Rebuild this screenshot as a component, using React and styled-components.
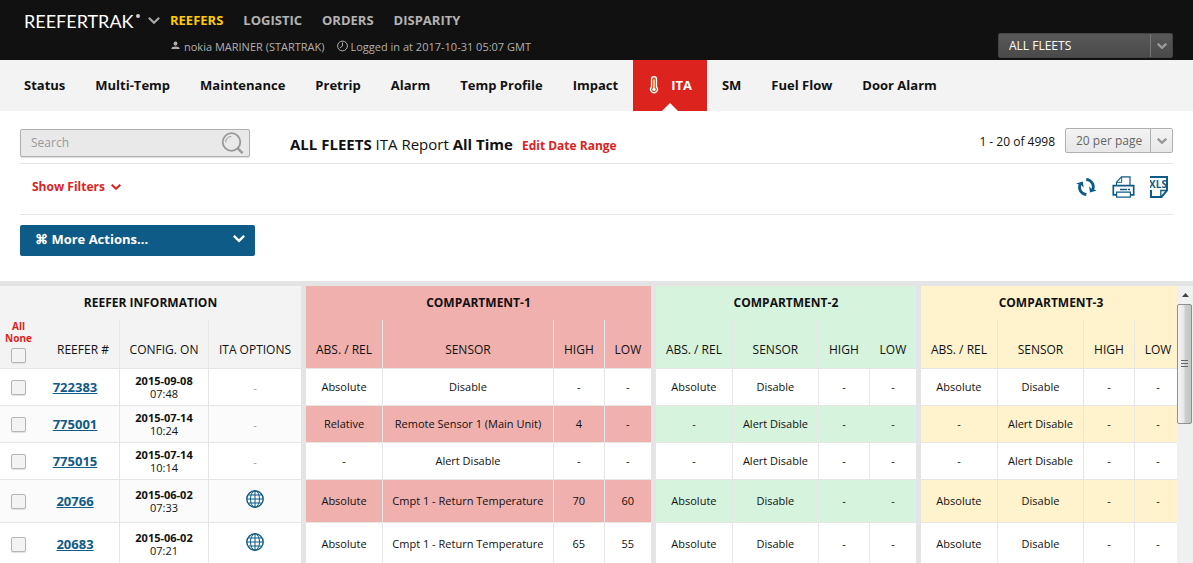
import React from "react";
import styled, { createGlobalStyle, css } from "styled-components";

const GlobalStyle = createGlobalStyle`
  *, *::before, *::after { box-sizing: border-box; }
  html, body { margin: 0; padding: 0; }
  body {
    font-family: "Open Sans", "Noto Sans", sans-serif;
    font-size: 12px;
    color: #111;
    background: #fff;
  }
  button, input, select { font-family: inherit; margin: 0; }
  a { color: inherit; text-decoration: none; }
`;

const Page = styled.div`
  height: 100vh;
  display: flex;
  flex-direction: column;
  overflow: hidden;
`;

/* ---------- top bar ---------- */

const TopBar = styled.header`
  flex: none;
  display: flex;
  align-items: flex-start;
  height: 60px;
  padding: 0 20px 0 24px;
  background: #111;
`;

const Brand = styled.button`
  flex: none;
  display: flex;
  align-items: center;
  width: 146px;
  height: 42px;
  padding: 0;
  border: 0;
  background: none;
  color: #fff;
  cursor: pointer;
`;

const Wordmark = styled.span`
  font-family: Lato, "Open Sans", sans-serif;
  font-size: 18px;
  line-height: 20px;
`;

const BrandDot = styled.span`
  width: 4px;
  height: 4px;
  margin: 0 8px 10px 2px;
  border-radius: 50%;
  background: #ccc;
`;

const TopMain = styled.div`
  flex: 1;
  min-width: 0;
  display: flex;
  flex-direction: column;
  gap: 8px;
  padding-top: 10px;
`;

const SectionNav = styled.nav`
  display: flex;
  gap: 20px;
`;

const SectionLink = styled.a`
  font-size: 13px;
  line-height: 20px;
  font-weight: 700;
  color: ${(p) => (p.$active ? "#fc0" : "#b3b3b3")};
`;

const SessionInfo = styled.div`
  display: flex;
  gap: 12px;
  color: #b0b0b0;
  font-size: 11px;
  line-height: 18px;
`;

const SessionItem = styled.span`
  display: flex;
  align-items: center;
  gap: 3px;
  white-space: nowrap;
`;

/* ---------- form controls ---------- */

const SelectBox = styled.div`
  flex: none;
  display: flex;
  position: relative;
  width: ${(p) => p.$width}px;
  height: 25px;
  margin-top: ${(p) => p.$top || 0}px;
  border: 1px solid ${(p) => (p.$dark ? "#444" : "#b0b0b0")};
  border-radius: 2px;
  background: ${(p) =>
    p.$dark
      ? "linear-gradient(#585858, #4a4a4a)"
      : "linear-gradient(#f3f3f3, #e8e8e8)"};
  color: ${(p) => (p.$dark ? "#fff" : "#666")};
`;

const SelectField = styled.select`
  appearance: none;
  width: 100%;
  padding: 0 24px 0 10px;
  border: 0;
  background: transparent;
  color: inherit;
  font-size: 12px;
  cursor: pointer;
`;

const SelectArrow = styled.span`
  position: absolute;
  top: 0;
  right: 0;
  bottom: 0;
  width: 22px;
  display: flex;
  align-items: center;
  justify-content: center;
  border-left: 1px solid ${(p) => (p.$dark ? "#777" : "#b0b0b0")};
  pointer-events: none;
`;

const Checkbox = styled.input`
  appearance: none;
  display: block;
  width: 15px;
  height: 15px;
  margin: 0 auto;
  border: 1px solid #b5b5b5;
  border-radius: 2px;
  background: #f3f3f3;
  box-shadow: 0 1px 1px #e0e0e0;
`;

/* ---------- report tabs ---------- */

const Tabs = styled.nav`
  flex: none;
  display: flex;
  height: 51px;
  padding-left: 9px;
  background: #f3f3f3;
`;

const Tab = styled.a`
  position: relative;
  display: flex;
  align-items: center;
  gap: 11px;
  padding: 0 15px 2px;
  font-size: 13px;
  line-height: 20px;
  font-weight: 700;
  white-space: nowrap;
  ${(p) =>
    p.$active &&
    css`
      background: #dc231e;
      color: #fff;
      &::after {
        content: "";
        position: absolute;
        left: 50%;
        bottom: 0;
        margin-left: -8px;
        border: 8px solid transparent;
        border-top: 0;
        border-bottom-color: #fff;
      }
    `}
`;

/* ---------- toolbar ---------- */

const Toolbar = styled.section`
  flex: none;
  padding: 0 20px;
`;

const TitleRow = styled.div`
  display: flex;
  align-items: flex-start;
  height: 53px;
  padding-top: 17px;
  border-bottom: 1px solid #e6e6e6;
`;

const SearchBox = styled.div`
  display: flex;
  align-items: center;
  width: 230px;
  height: 28px;
  margin-top: 1px;
  padding-right: 5px;
  border: 1px solid #b0b0b0;
  border-radius: 2px;
  background: #e9e9e9;
  box-shadow: 0 1px 1px #ddd;
`;

const SearchInput = styled.input`
  flex: 1;
  min-width: 0;
  padding: 0 10px 1px;
  border: 0;
  outline: 0;
  background: none;
  font-size: 12px;
  &::placeholder { color: #999; opacity: 1; }
`;

const Title = styled.h1`
  flex: 1;
  display: flex;
  align-items: baseline;
  gap: 9px;
  margin: 0;
  padding: 6px 0 0 40px;
  font-size: 15px;
  line-height: 20px;
  font-weight: 400;
  white-space: nowrap;
`;

const RedLink = styled.a`
  font-size: 12px;
  font-weight: 700;
  color: #dc231e;
`;

const RangeText = styled.span`
  padding: 4px 10px 0 0;
  font-size: 12px;
  line-height: 20px;
`;

const FilterRow = styled.div`
  display: flex;
  align-items: center;
  justify-content: space-between;
  height: 51px;
  padding: 0 5px 5px 12px;
  border-bottom: 1px solid #e6e6e6;
`;

const FilterToggle = styled.button`
  display: flex;
  align-items: center;
  gap: 6px;
  padding: 0;
  border: 0;
  background: none;
  color: #dc231e;
  font-size: 12px;
  font-weight: 700;
  cursor: pointer;
`;

const IconGroup = styled.div`
  display: flex;
  align-items: center;
  gap: 15px;
`;

const IconButton = styled.button`
  display: flex;
  padding: 0;
  border: 0;
  background: none;
  color: #0f5b87;
  cursor: pointer;
`;

const ActionsButton = styled.button`
  display: flex;
  align-items: center;
  justify-content: space-between;
  width: 235px;
  height: 31px;
  margin: 10px 0 25px;
  padding: 0 10px 3px 15px;
  border: 0;
  border-radius: 2px;
  background: #0f5b87;
  color: #fff;
  font-size: 13px;
  font-weight: 700;
  cursor: pointer;
`;

/* ---------- grid ---------- */

const GridArea = styled.section`
  flex: 1;
  min-height: 0;
  display: flex;
  border-top: 5px solid #e4e4e4;
`;

const GridViewport = styled.div`
  flex: 1;
  min-width: 0;
  overflow: hidden;
`;

const Table = styled.table`
  table-layout: fixed;
  width: 100%;
  min-width: 1186px;
  border-collapse: separate;
  border-spacing: 0;
  text-align: center;
`;

const tints = { plain: "#f3f3f3", red: "#f0b0ae", green: "#d6f3dd", yellow: "#fef3cc" };

const GroupHead = styled.th`
  height: 34px;
  padding: 0;
  border-right: 5px solid #e4e4e4;
  background: ${(p) => tints[p.$tint]};
  font-size: 12px;
  line-height: 16px;
  font-weight: 700;
`;

const ColumnHead = styled.th`
  height: 48px;
  padding: 0 0 10px;
  vertical-align: bottom;
  border-right: ${(p) => (p.$last ? "5px solid #e4e4e4" : p.$bare ? "0" : "1px solid #e6e6e6")};
  border-bottom: 1px solid #e6e6e6;
  background: ${(p) => tints[p.$tint]};
  font-size: 12px;
  line-height: 16px;
  font-weight: 400;
`;

const SelectHead = styled(ColumnHead)`
  padding-bottom: 5px;
`;

const ReeferHead = styled(ColumnHead)`
  padding-left: 10px;
`;

const PickLink = styled.a`
  display: block;
  font-size: 10px;
  line-height: 12px;
  font-weight: 700;
  color: #dc231e;
  &:last-of-type { margin-bottom: 4px; }
`;

const Cell = styled.td`
  height: ${(p) => (p.$tall ? 43 : 37)}px;
  padding: 0;
  border-right: ${(p) => (p.$last ? "5px solid #e4e4e4" : p.$bare ? "0" : "1px solid #e6e6e6")};
  border-bottom: 1px solid #e6e6e6;
  background: ${(p) => (!p.$striped ? "#fff" : p.$tint === "plain" ? "#fbfbfb" : tints[p.$tint])};
  font-size: 11px;
  line-height: 13px;
`;

const ReeferCell = styled(Cell)`
  padding-right: 6px;
`;

const ValueCell = styled(Cell)`
  padding-bottom: 2px;
`;

const ReeferLink = styled.a`
  font-size: 13px;
  line-height: 18px;
  font-weight: 700;
  color: #0f5b87;
  text-decoration: underline;
`;

const ConfigDate = styled.strong`
  display: block;
`;

const Muted = styled.span`
  color: #999;
`;

const ScrollTrack = styled.div`
  flex: none;
  width: 16px;
  display: flex;
  flex-direction: column;
  background: #f0f0f0;
`;

const ScrollArrow = styled.button`
  display: flex;
  align-items: center;
  justify-content: center;
  height: 18px;
  padding: 0;
  border: 0;
  background: none;
`;

const ScrollThumb = styled.div`
  display: flex;
  align-items: center;
  justify-content: center;
  width: 15px;
  height: 120px;
  border: 1px solid #8f8f8f;
  border-radius: 2px;
  background: linear-gradient(90deg, #f5f5f5, #e6e6e6 45%, #cfcfcf 55%, #c4c4c4);
`;

/* ---------- icons ---------- */

const Chevron = ({ color, size = 10, stroke = 2 }) => (
  <svg width={size} height={size * 0.6} viewBox="0 0 10 6" fill="none" stroke={color} strokeWidth={stroke} aria-hidden="true">
    <path d="M.7.7 5 4.8 9.3.7" />
  </svg>
);

const UserIcon = () => (
  <svg width="11" height="12" viewBox="0 0 11 12" fill="#b0b0b0" aria-hidden="true">
    <ellipse cx="5.5" cy="2.6" rx="1.9" ry="2.1" />
    <path d="M1.300 8c0-1.700 1.700-2.500 4.200-2.500S9.700 6.300 9.700 8z" />
  </svg>
);

const ClockIcon = () => (
  <svg width="11" height="14" viewBox="0 0 11 14" fill="none" stroke="#b0b0b0" aria-hidden="true">
    <circle cx="5.5" cy="6" r="4.9" />
    <path d="M5.5 2.5V6L3 8" />
  </svg>
);

const ThermometerIcon = () => (
  <svg width="12" height="18" viewBox="0 0 12 18" aria-hidden="true">
    <path d="M3.5 11V3.2a2.5 2.5 0 0 1 5 0V11a3.4 3.4 0 1 1-5 0z" fill="#c8531e" stroke="#fff" strokeWidth="1.3" />
    <path d="M6 3.5V13" stroke="#fbd9a0" strokeWidth="1.6" />
    <circle cx="6" cy="13.3" r="1.6" fill="#fff" />
  </svg>
);

const SearchIcon = () => (
  <svg width="23" height="23" viewBox="0 0 23 23" fill="none" stroke="#999" aria-hidden="true">
    <circle cx="10.5" cy="10" r="8.8" strokeWidth="1.8" />
    <path d="M4.6 10.2a6 6 0 0 1 5.6-5.8" strokeWidth="1" />
    <path d="m16.5 16.2 5 5" strokeWidth="2.4" />
  </svg>
);

const RefreshIcon = () => (
  <svg width="21" height="20" viewBox="0 0 21 20" fill="none" stroke="currentColor" strokeWidth="2.800" aria-hidden="true">
    <path d="M10.400 17.600C4.400 16.800 2 11.500 4.400 6.500" />
    <path d="M0 6.500 6.800 4.600l.9 6.200-2.200-2.600z" fill="currentColor" stroke="none" />
    <path d="M10.200 2.400C16.200 3.200 18.800 8.500 16.400 13.500" />
    <path d="m20.800 13.500-6.800 1.900-.9-6.200 2.200 2.600z" fill="currentColor" stroke="none" />
  </svg>
);

const PrintIcon = () => (
  <svg width="23" height="22" viewBox="0 0 23 22" fill="none" stroke="currentColor" aria-hidden="true">
    <path d="M4.500 9V6.200L9.500.8h8.500V9" strokeWidth="1.200" />
    <path d="M9.700 1v5.300H5" strokeWidth="1" />
    <path d="M4.500 18.800H1.300V9.700h20.400v9.100h-3.200" strokeWidth="1.700" />
    <path d="M4.600 16.200h13.800v5H4.600z" strokeWidth="1.200" />
    <path d="M8 13.500h7M16 13.500h2" strokeWidth="1.400" />
  </svg>
);

const XlsText = styled.text`
  font-family: "Liberation Sans Narrow", "Open Sans", sans-serif;
  font-size: 10px;
  font-weight: 700;
`;

const XlsIcon = () => (
  <svg width="18" height="22" viewBox="0 0 18 22" aria-hidden="true">
    <path d="M0 1h17v13.500L11.500 21H1v-7" fill="none" stroke="currentColor" strokeWidth="2" />
    <path d="M10.800 20.500v-6H17" fill="none" stroke="currentColor" strokeWidth="1.300" />
    <XlsText x="8" y="12" textAnchor="middle" fill="currentColor">XLS</XlsText>
  </svg>
);

const GlobeSvg = styled.svg`
  display: block;
  margin: 0 auto 4px;
`;

const GlobeIcon = () => (
  <GlobeSvg width="18" height="18" viewBox="0 0 18 18" fill="none" stroke="#0f5b87" role="img" aria-label="ITA options">
    <circle cx="9" cy="9" r="8.200" strokeWidth="1.400" />
    <ellipse cx="9" cy="9" rx="4.500" ry="8.200" />
    <path d="M9 1v16" />
    <path d="M1 9h16M2.500 5h13M2.500 13h13" />
  </GlobeSvg>
);

const ScrollUpIcon = () => (
  <svg width="7" height="4" viewBox="0 0 7 4" aria-hidden="true">
    <path d="M0 4 3.500 0 7 4z" fill="#444" />
  </svg>
);

const GripIcon = () => (
  <svg width="7" height="8" viewBox="0 0 7 8" stroke="#666" aria-hidden="true">
    <path d="M0 .5h7M0 3.500h7M0 6.500h7" />
  </svg>
);

/* ---------- data ---------- */

const sections = ["REEFERS", "LOGISTIC", "ORDERS", "DISPARITY"];
const tabs = [
  "Status", "Multi-Temp", "Maintenance", "Pretrip", "Alarm", "Temp Profile",
  "Impact", "ITA", "SM", "Fuel Flow", "Door Alarm",
];
const compartments = [
  { name: "COMPARTMENT-1", tint: "red" },
  { name: "COMPARTMENT-2", tint: "green" },
  { name: "COMPARTMENT-3", tint: "yellow" },
];
const compartmentColumns = ["ABS. / REL", "SENSOR", "HIGH", "LOW"];
const columnWidths = [37, 83, 89, 97, 77, null, 51, 51, 77, 86, 51, 51, 77, 86, 51, 51];

const off = ["Absolute", "Disable", "-", "-"];
const alertOff = ["-", "Alert Disable", "-", "-"];
const rows = [
  { id: "722383", date: "2015-09-08", time: "07:48", values: [off, off, off] },
  { id: "775001", date: "2015-07-14", time: "10:24", values: [["Relative", "Remote Sensor 1 (Main Unit)", "4", "-"], alertOff, alertOff] },
  { id: "775015", date: "2015-07-14", time: "10:14", values: [alertOff, alertOff, alertOff] },
  { id: "20766", date: "2015-06-02", time: "07:33", options: true, values: [["Absolute", "Cmpt 1 - Return Temperature", "70", "60"], off, off] },
  { id: "20683", date: "2015-06-02", time: "07:21", options: true, values: [["Absolute", "Cmpt 1 - Return Temperature", "65", "55"], off, off] },
];

/* ---------- parts ---------- */

function Select({ label, value, width, top, dark }) {
  return (
    <SelectBox $width={width} $top={top} $dark={dark}>
      <SelectField aria-label={label} defaultValue={value}>
        <option>{value}</option>
      </SelectField>
      <SelectArrow $dark={dark}>
        <Chevron color="#999" stroke={2.4} />
      </SelectArrow>
    </SelectBox>
  );
}

function ReeferRow({ row, striped }) {
  const shared = { $tall: row.options, $striped: striped };
  return (
    <tr>
      <Cell {...shared} $tint="plain" $bare>
        <Checkbox type="checkbox" aria-label={`Select ${row.id}`} />
      </Cell>
      <ReeferCell {...shared} $tint="plain"><ReeferLink href="#reefer">{row.id}</ReeferLink></ReeferCell>
      <Cell {...shared} $tint="plain">
        <ConfigDate>{row.date}</ConfigDate>
        {row.time}
      </Cell>
      <Cell {...shared} $tint="plain" $last>
        {row.options ? <GlobeIcon /> : <Muted>-</Muted>}
      </Cell>
      {row.values.map((group, g) =>
        group.map((value, i) => (
          <ValueCell key={`${g}-${i}`} {...shared} $tint={compartments[g].tint} $last={i === 3}>
            {value}
          </ValueCell>
        ))
      )}
    </tr>
  );
}

export default function App() {
  return (
    <Page>
      <GlobalStyle />
      <TopBar>
        <Brand type="button">
          <Wordmark>REEFERTRAK</Wordmark>
          <BrandDot />
          <Chevron color="#aaa" size={12} stroke={1.8} />
        </Brand>
        <TopMain>
          <SectionNav>
            {sections.map((s, i) => (
              <SectionLink key={s} href="#section" $active={i === 0}>{s}</SectionLink>
            ))}
          </SectionNav>
          <SessionInfo>
            <SessionItem><UserIcon />nokia MARINER (STARTRAK)</SessionItem>
            <SessionItem><ClockIcon />Logged in at 2017-10-31 05:07 GMT</SessionItem>
          </SessionInfo>
        </TopMain>
        <Select label="Fleet" value="ALL FLEETS" width={175} top={33} dark />
      </TopBar>

      <Tabs>
        {tabs.map((t) => (
          <Tab key={t} href="#tab" $active={t === "ITA"}>
            {t === "ITA" && <ThermometerIcon />}
            {t}
          </Tab>
        ))}
      </Tabs>

      <Toolbar>
        <TitleRow>
          <SearchBox>
            <SearchInput type="text" aria-label="Search" placeholder="Search" />
            <SearchIcon />
          </SearchBox>
          <Title>
            <span><b>ALL FLEETS</b> ITA Report <b>All Time</b></span>
            <RedLink href="#range">Edit Date Range</RedLink>
          </Title>
          <RangeText>1 - 20 of 4998</RangeText>
          <Select label="Rows per page" value="20 per page" width={108} />
        </TitleRow>
        <FilterRow>
          <FilterToggle type="button">Show Filters<Chevron color="#dc231e" /></FilterToggle>
          <IconGroup>
            <IconButton type="button" aria-label="Refresh"><RefreshIcon /></IconButton>
            <IconButton type="button" aria-label="Print"><PrintIcon /></IconButton>
            <IconButton type="button" aria-label="Export XLS"><XlsIcon /></IconButton>
          </IconGroup>
        </FilterRow>
        <ActionsButton type="button">
          <span>⌘ More Actions...</span>
          <Chevron color="#fff" size={12} />
        </ActionsButton>
      </Toolbar>

      <GridArea>
        <GridViewport>
          <Table>
            <colgroup>
              {columnWidths.map((w, i) => <col key={i} width={w ?? undefined} />)}
            </colgroup>
            <thead>
              <tr>
                <GroupHead colSpan={4} $tint="plain">REEFER INFORMATION</GroupHead>
                {compartments.map((c) => (
                  <GroupHead key={c.name} colSpan={4} $tint={c.tint}>{c.name}</GroupHead>
                ))}
              </tr>
              <tr>
                <SelectHead $tint="plain" $bare>
                  <PickLink href="#all">All</PickLink>
                  <PickLink href="#none">None</PickLink>
                  <Checkbox type="checkbox" aria-label="Select all" />
                </SelectHead>
                <ReeferHead $tint="plain">REEFER #</ReeferHead>
                <ColumnHead $tint="plain">CONFIG. ON</ColumnHead>
                <ColumnHead $tint="plain" $last>ITA OPTIONS</ColumnHead>
                {compartments.map((c) =>
                  compartmentColumns.map((name, i) => (
                    <ColumnHead key={c.name + name} $tint={c.tint} $last={i === 3}>{name}</ColumnHead>
                  ))
                )}
              </tr>
            </thead>
            <tbody>
              {rows.map((row, i) => <ReeferRow key={row.id} row={row} striped={i % 2 === 1} />)}
            </tbody>
          </Table>
        </GridViewport>
        <ScrollTrack>
          <ScrollArrow type="button" aria-label="Scroll up"><ScrollUpIcon /></ScrollArrow>
          <ScrollThumb><GripIcon /></ScrollThumb>
        </ScrollTrack>
      </GridArea>
    </Page>
  );
}
